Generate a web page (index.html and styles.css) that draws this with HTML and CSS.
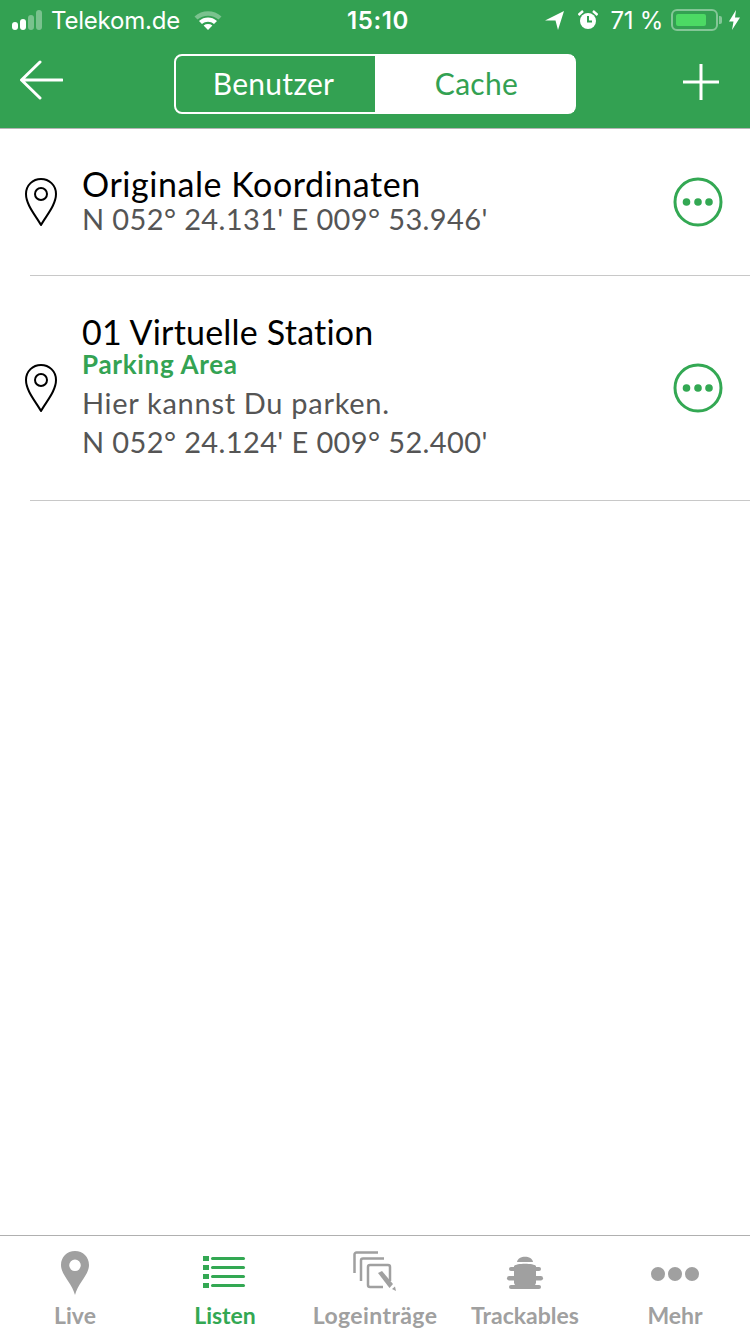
FILE: index.html
```html
<!DOCTYPE html>
<html lang="de">
  <head>
    <meta charset="utf-8">
    <title>Wegpunkte</title>
    <link rel="stylesheet" href="styles.css">
  </head>
  <body>
    <div class="app">
      <header class="top">
        <div class="status">
          <div class="status-left">
            <span class="signal"><i class="on"></i><i class="on"></i><i></i><i></i></span>
            <span class="carrier">Telekom.de</span>
            <svg class="wifi" width="28" height="20" viewBox="0 0 28 20">
              <path d="M0.5 6.5C8 -0.5 20 -0.5 27.5 6.5L24.5 9.6C18.6 4.4 9.4 4.4 3.5 9.6Z" fill="#fff" opacity=".35"/>
              <path d="M5 11C10.4 6.4 17.6 6.4 23 11L20 14C16.4 11 11.6 11 8 14Z" fill="#fff"/>
              <path d="M9.6 15.4C12.2 13.6 15.8 13.6 18.4 15.4L14 20Z" fill="#fff"/>
            </svg>
          </div>
          <span class="clock">15:10</span>
          <div class="status-right">
            <svg width="20" height="20" viewBox="0 0 20 20"><path d="M0 10.5L19 1L13 20L10.5 10.5Z" fill="#fff"/></svg>
            <svg class="alarm" width="20" height="20" viewBox="0 0 20 20">
              <circle cx="10" cy="11" r="8" fill="#fff"/>
              <path d="M10 6V11.5H14" fill="none" stroke="#33a152" stroke-width="2"/>
              <path d="M0.5 5L5 1M19.5 5L15 1" stroke="#fff" stroke-width="2.4"/>
            </svg>
            <span class="percent">71 %</span>
            <span class="battery"><span class="battery-level"></span></span>
            <span class="battery-tip"></span>
            <svg width="11" height="20" viewBox="0 0 11 20"><path d="M7 0L0 11.5H4.5L3 20L11 7.5H6Z" fill="#fff"/></svg>
          </div>
        </div>
        <nav class="nav">
          <svg width="44" height="40" viewBox="0 0 44 40"><path d="M21 2L2.5 20L21 38M3 20H43" fill="none" stroke="#fff" stroke-width="3" stroke-linecap="round" stroke-linejoin="round"/></svg>
          <div class="segments">
            <span class="segment">Benutzer</span>
            <span class="segment active">Cache</span>
          </div>
          <svg class="plus" width="36" height="36" viewBox="0 0 36 36"><path d="M18 0V36M0 18H36" stroke="#fff" stroke-width="3"/></svg>
        </nav>
      </header>

      <main class="list">
        <div class="row row-short">
          <svg class="pin" width="34" height="50" viewBox="0 0 34 50">
            <path d="M17 48C12 39 2 28 2 17C2 8 9 2 17 2C25 2 32 8 32 17C32 28 22 39 17 48Z" fill="none" stroke="#000" stroke-width="2" stroke-linejoin="round"/>
            <circle cx="17" cy="17" r="6" fill="none" stroke="#000" stroke-width="2"/>
          </svg>
          <div class="row-text">
            <div class="title">Originale Koordinaten</div>
            <div class="detail">N 052° 24.131' E 009° 53.946'</div>
          </div>
          <svg class="more" width="50" height="50" viewBox="0 0 50 50">
            <circle cx="25" cy="25" r="23" fill="none" stroke="#33a853" stroke-width="3"/>
            <circle cx="13.5" cy="25" r="3.8" fill="#33a853"/><circle cx="25" cy="25" r="3.8" fill="#33a853"/><circle cx="36" cy="25" r="3.8" fill="#33a853"/>
          </svg>
        </div>
        <div class="row row-tall">
          <svg class="pin" width="34" height="50" viewBox="0 0 34 50">
            <path d="M17 48C12 39 2 28 2 17C2 8 9 2 17 2C25 2 32 8 32 17C32 28 22 39 17 48Z" fill="none" stroke="#000" stroke-width="2" stroke-linejoin="round"/>
            <circle cx="17" cy="17" r="6" fill="none" stroke="#000" stroke-width="2"/>
          </svg>
          <div class="row-text">
            <div class="title">01 Virtuelle Station</div>
            <div class="kind">Parking Area</div>
            <div class="detail note">Hier kannst Du parken.</div>
            <div class="detail spaced">N 052° 24.124' E 009° 52.400'</div>
          </div>
          <svg class="more" width="50" height="50" viewBox="0 0 50 50">
            <circle cx="25" cy="25" r="23" fill="none" stroke="#33a853" stroke-width="3"/>
            <circle cx="13.5" cy="25" r="3.8" fill="#33a853"/><circle cx="25" cy="25" r="3.8" fill="#33a853"/><circle cx="36" cy="25" r="3.8" fill="#33a853"/>
          </svg>
        </div>
      </main>

      <footer class="tabs">
        <div class="tab">
          <svg width="30" height="44" viewBox="0 0 30 44">
            <path fill-rule="evenodd" d="M15 0C23 0 29 6 29 14C29 24 18 32 15 44C12 32 1 24 1 14C1 6 7 0 15 0ZM15 8.500A5.800 5.800 0 1 0 15 20.100A5.800 5.800 0 1 0 15 8.500Z" fill="#a0a0a0"/>
          </svg>
          <span>Live</span>
        </div>
        <div class="tab current">
          <svg class="lift-list" width="44" height="36" viewBox="0 0 44 36">
            <g fill="#33a853">
              <rect x="0" y="3" width="6" height="5"/><rect x="0" y="12" width="6" height="5"/><rect x="0" y="21" width="6" height="5"/><rect x="0" y="30" width="6" height="5"/>
              <rect x="8" y="4" width="34" height="3" rx="1.500"/><rect x="8" y="13" width="34" height="3" rx="1.500"/><rect x="8" y="22" width="34" height="3" rx="1.500"/><rect x="8" y="31" width="34" height="3" rx="1.500"/>
            </g>
          </svg>
          <span>Listen</span>
        </div>
        <div class="tab">
          <svg width="44" height="44" viewBox="0 0 44 44">
            <g fill="none" stroke="#a0a0a0" stroke-width="2.500">
              <path d="M25 1.500H3.500A2 2 0 0 0 1.500 3.500V22"/>
              <path d="M31 7.500H10A2 2 0 0 0 8 9.500V30"/>
              <path d="M30 36H17A2 2 0 0 1 15 34V16A2 2 0 0 1 17 14H35A2 2 0 0 1 37 16V30"/>
            </g>
            <path d="M25 22L29 20L40 33L36.500 37Z" fill="#a0a0a0"/>
            <path d="M39 38L42 35.500L43 40Z" fill="#a0a0a0"/>
          </svg>
          <span class="long-label">Logeinträge</span>
        </div>
        <div class="tab">
          <svg class="lift-bug" width="38" height="40" viewBox="0 0 38 40">
            <g fill="#a0a0a0">
              <path d="M11 9C12 2 26 2 27 9Z"/>
              <path d="M8 13C10 10 28 10 30 13V30C27 38 11 38 8 30Z"/>
              <rect x="3" y="14" width="32" height="4" rx="2"/>
              <rect x="1" y="23" width="36" height="4.500" rx="2.200"/>
              <rect x="3" y="32" width="32" height="4" rx="2"/>
            </g>
          </svg>
          <span>Trackables</span>
        </div>
        <div class="tab">
          <svg class="lift-dots" width="50" height="16" viewBox="0 0 50 16">
            <circle cx="8" cy="8" r="7" fill="#a0a0a0"/><circle cx="25" cy="8" r="7" fill="#a0a0a0"/><circle cx="42" cy="8" r="7" fill="#a0a0a0"/>
          </svg>
          <span>Mehr</span>
        </div>
      </footer>
    </div>
  </body>
</html>
```

FILE: styles.css
```css
* {
  margin: 0;
  box-sizing: border-box;
}
body {
  background: #fff;
  font-family: Lato, "Noto Sans", sans-serif;
}
.app {
  width: 750px;
  height: 1334px;
  display: flex;
  flex-direction: column;
  overflow: hidden;
}

/* status bar + nav */
.top {
  height: 129px;
  background: #33a152;
  border-bottom: 1px solid #b5b5b5;
  color: #fff;
}
.status {
  height: 40px;
  padding: 0 10px 0 12px;
  display: flex;
  justify-content: space-between;
  align-items: center;
  font-family: Inter, sans-serif;
  font-size: 24px;
  position: relative;
}
.status-left,
.status-right {
  display: flex;
  align-items: center;
}
.signal {
  display: flex;
  align-items: flex-end;
  gap: 2px;
  height: 20px;
  margin-right: 9px;
}
.signal i {
  width: 6px;
  background: rgba(255, 255, 255, .35);
  border-radius: 3px;
}
.signal i:nth-child(1) { height: 8px; }
.signal i:nth-child(2) { height: 11px; }
.signal i:nth-child(3) { height: 15px; }
.signal i:nth-child(4) { height: 20px; }
.signal i.on { background: #fff; }
.carrier {
  font-size: 24px;
  letter-spacing: -.2px;
}
.wifi {
  margin-left: 14px;
}
.clock {
  position: absolute;
  left: 347px;
  font-weight: 600;
  letter-spacing: .6px;
}
.alarm {
  margin-left: 13px;
}
.percent {
  margin-left: 13px;
  letter-spacing: -.3px;
}
.battery {
  width: 47px;
  height: 22px;
  margin-left: 8px;
  padding: 3px;
  border: 2px solid rgba(255, 255, 255, .4);
  border-radius: 6px;
}
.battery-level {
  display: block;
  width: 30px;
  height: 100%;
  background: #4cd964;
  border-radius: 2px;
}
.battery-tip {
  width: 3px;
  height: 8px;
  margin: 0 7px 0 1px;
  background: rgba(255, 255, 255, .4);
  border-radius: 0 2px 2px 0;
}
.nav {
  height: 88px;
  padding: 0 31px 8px 19px;
  display: flex;
  justify-content: space-between;
  align-items: center;
}
.segments {
  width: 402px;
  height: 60px;
  display: flex;
  border: 2px solid #fff;
  border-radius: 8px;
  font-size: 30px;
  letter-spacing: .3px;
  margin: 8px 0 0 4px;
}
.segment {
  flex: 1;
  display: flex;
  align-items: center;
  justify-content: center;
  padding: 0 4px 3px 0;
}
.segment.active {
  background: #fff;
  color: #33a152;
  padding: 0 0 3px 4px;
}
.plus {
  margin-top: 4px;
}

/* list */
.list {
  flex: 1;
}
.row {
  display: flex;
  align-items: center;
  padding: 0 27px 1px 24px;
  position: relative;
}
.row::after {
  content: "";
  position: absolute;
  left: 30px;
  right: 0;
  bottom: 0;
  height: 1px;
  background: #c8c8c8;
}
.row-short {
  height: 147px;
}
.row-tall {
  height: 225px;
}
.row-text {
  flex: 1;
  margin-left: 25px;
  position: relative;
  left: -1px;
}
.row-short .row-text {
  margin-bottom: 3px;
}
.row-tall .row-text {
  margin-bottom: 1px;
}
.title {
  font-size: 34px;
  line-height: 37px;
  letter-spacing: .55px;
  color: #000;
}
.row-tall .title {
  letter-spacing: .2px;
}
.kind {
  font-size: 26px;
  line-height: 28px;
  font-weight: 700;
  letter-spacing: .7px;
  color: #34a353;
}
.detail {
  font-size: 29px;
  line-height: 34px;
  letter-spacing: .38px;
  color: #555;
}
.detail.note {
  margin-top: 5px;
  line-height: 39px;
  letter-spacing: .7px;
}
.detail.spaced {
  line-height: 40px;
}

/* tab bar */
.tabs {
  height: 99px;
  border-top: 1px solid #b0b0b0;
  display: flex;
}
.tab {
  flex: 1;
  display: flex;
  flex-direction: column;
  align-items: center;
  justify-content: flex-end;
  padding-bottom: 5px;
  font-size: 23px;
  line-height: 28px;
  font-weight: 700;
  color: #a0a0a0;
  gap: 6px;
}
.tab svg {
  flex: none;
}
.tab.current {
  color: #33a853;
}
.long-label {
  letter-spacing: .4px;
}
.lift-list {
  margin-bottom: 6px;
}
.lift-bug {
  margin-bottom: 2px;
}
.lift-dots {
  margin-bottom: 13px;
}
```
